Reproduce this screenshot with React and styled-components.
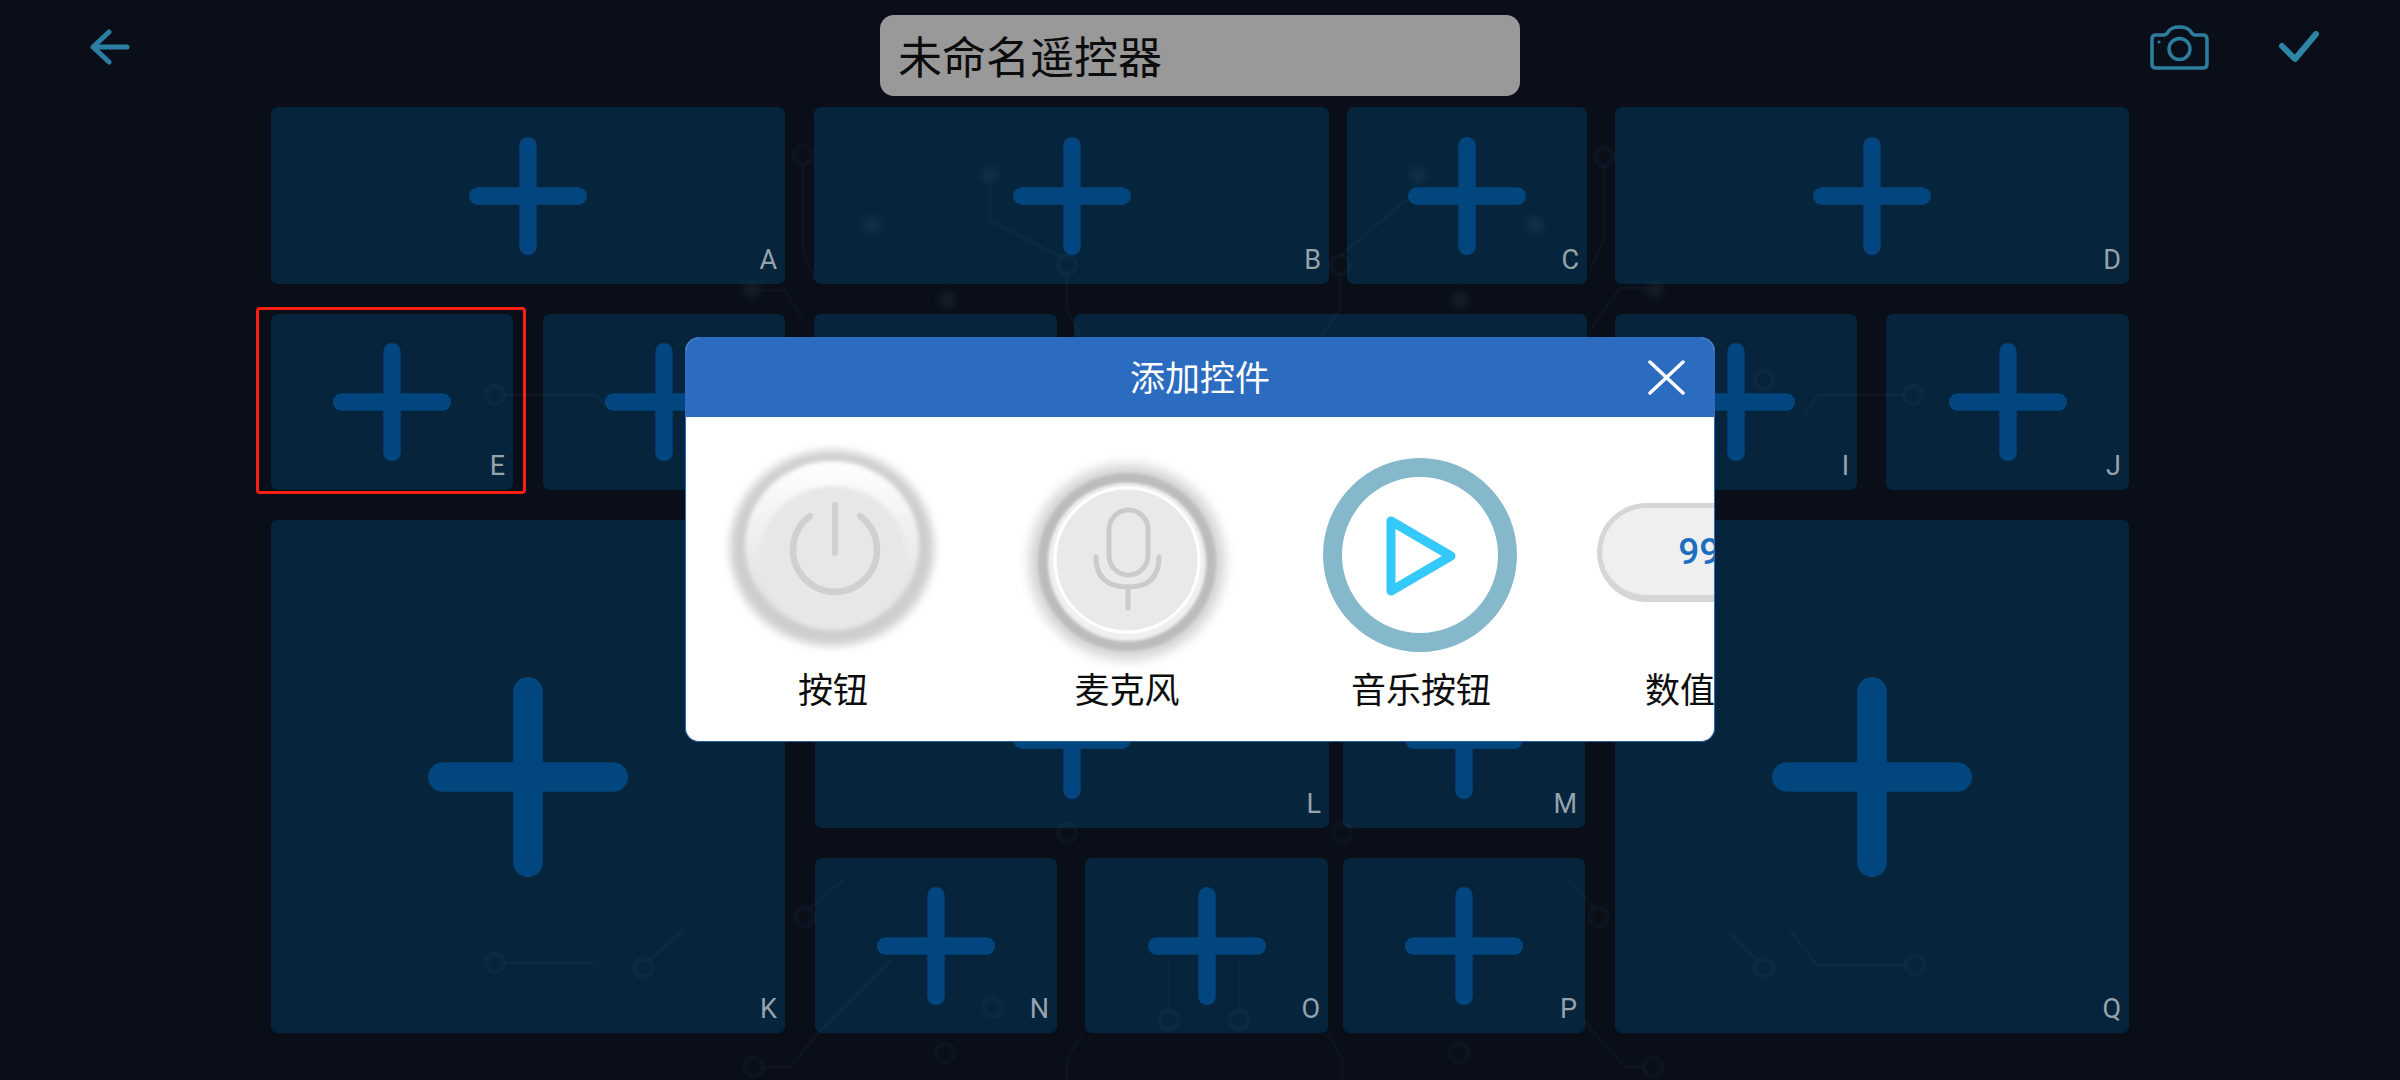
import React from "react";
import styled, { createGlobalStyle } from "styled-components";

const GlobalStyle = createGlobalStyle`
  html, body {
    margin: 0;
    padding: 0;
    background: #090e18;
  }
`;

const Page = styled.div`
  position: relative;
  width: 2400px;
  height: 1080px;
  overflow: hidden;
  background: #090e18;
  font-family: "Noto Sans CJK SC", "Noto Sans", sans-serif;
`;

const TopBar = styled.header`
  display: grid;
  grid-template-columns: 880px 640px 1fr;
  align-items: start;
  height: 107px;
  padding-top: 15px;
  box-sizing: border-box;
`;

const LeftCell = styled.div`
  display: flex;
  align-items: center;
  height: 64px;
  padding-left: 90px;
`;

const RightCell = styled.div`
  display: flex;
  align-items: center;
  justify-content: flex-end;
  gap: 70px;
  height: 64px;
  padding-right: 81px;
`;

const TitleInput = styled.div`
  display: flex;
  align-items: center;
  height: 81px;
  padding: 0 0 2px 18px;
  box-sizing: border-box;
  background: #999999;
  border-radius: 14px;
  color: #0c0c0c;
  font-size: 44px;
`;

const Board = styled.main`
  display: flex;
  flex-direction: column;
  gap: 30px;
  padding-left: 271px;
`;

const Row = styled.div`
  display: flex;
  height: ${({ $h }) => $h}px;
`;

const Card = styled.div`
  position: relative;
  display: grid;
  flex: none;
  width: ${({ $w }) => $w}px;
  margin-left: ${({ $ml }) => $ml || 0}px;
  background: #06243b;
  border-radius: 7px;
`;

const PlusSvg = styled.svg`
  grid-area: 1 / 1;
  place-self: center;
`;

const Letter = styled.span`
  grid-area: 1 / 1;
  place-self: end;
  margin: 0 8px 8px 0;
  color: #97a3ab;
  font-family: Roboto, "Liberation Sans", sans-serif;
  font-size: 27px;
  line-height: 32px;
`;

const Selection = styled.div`
  position: absolute;
  inset: -7px -13px -4px -15px;
  border: 3px solid #fb1f12;
  border-radius: 4px;
`;

const MiddleColumn = styled.div`
  display: flex;
  flex: none;
  flex-direction: column;
  justify-content: flex-end;
  gap: 30px;
  width: 772px;
  margin-left: 29px;
`;

const TraceLayer = styled.svg`
  position: absolute;
  inset: 0;
  pointer-events: none;
`;

const Modal = styled.section`
  position: absolute;
  left: 685px;
  top: 337px;
  width: 1030px;
  height: 405px;
  box-sizing: border-box;
  overflow: hidden;
  background: #ffffff;
  border: 1px solid #2b6cc0;
  border-bottom-color: #2a5f9e;
  border-radius: 14px;
`;

const ModalHeader = styled.div`
  display: grid;
  grid-template-columns: 1fr auto 1fr;
  align-items: center;
  height: 79px;
  padding-bottom: 4px;
  box-sizing: border-box;
  background: #2b6cc0;
  color: #ffffff;
  font-size: 35px;
`;

const ModalTitle = styled.span`
  grid-column: 2;
`;

const CloseIcon = styled.svg`
  grid-column: 3;
  justify-self: end;
  margin: 4px 29px 0 0;
`;

const WidgetList = styled.div`
  display: flex;
  padding-top: 23px;
`;

const Widget = styled.div`
  display: flex;
  flex: none;
  flex-direction: column;
  align-items: center;
  width: 294px;
`;

const WidgetSlot = styled.div`
  display: flex;
  justify-content: center;
  width: 100%;
  height: 228px;
`;

const WidgetLabel = styled.div`
  color: #0d0d0d;
  font-size: 35px;
  line-height: 40px;
  white-space: nowrap;
`;

const ValuePill = styled.div`
  display: flex;
  align-items: center;
  justify-content: center;
  width: 236px;
  height: 99px;
  margin-top: 63px;
  box-sizing: border-box;
  background: #efefef;
  border: 5px solid #d6d6d6;
  border-bottom-width: 7px;
  border-radius: 50px;
  color: #1c6fbe;
  font-family: Roboto, "Liberation Sans", sans-serif;
  font-size: 37px;
  font-weight: 500;
`;

const Plus = ({ size }) => (
  <PlusSvg width={size} height={size} viewBox="0 0 100 100">
    <rect x="42.6" width="14.8" height="100" rx="7.4" fill="#02467f" />
    <rect y="42.6" width="100" height="14.8" rx="7.4" fill="#02467f" />
  </PlusSvg>
);

const Tile = ({ letter, w, ml, big, selected }) => (
  <Card $w={w} $ml={ml}>
    <Plus size={big ? 200 : 118} />
    <Letter>{letter}</Letter>
    {selected && <Selection />}
  </Card>
);

const BackIcon = () => (
  <svg width="40" height="36" viewBox="0 0 40 36" fill="none" stroke="#2c7ea3" strokeWidth="5" strokeLinecap="round" strokeLinejoin="round">
    <path d="M19 3 L3 18 L19 33 M3 18 H37" />
  </svg>
);

const CameraIcon = () => (
  <svg width="59" height="45" viewBox="0 0 59 45" fill="none" stroke="#2d7d9f" strokeWidth="3.5">
    <path d="M6 10 H14 Q16 10 18 7 Q21 2 29.5 2 Q38 2 41 7 Q43 10 45 10 H53 Q57 10 57 14 V39 Q57 43 53 43 H6 Q2 43 2 39 V14 Q2 10 6 10 Z" />
    <circle cx="29.5" cy="24" r="10.5" />
    <circle cx="9" cy="17" r="1.6" fill="#2d7d9f" stroke="none" />
  </svg>
);

const CheckIcon = () => (
  <svg width="40" height="32" viewBox="0 0 40 32" fill="none" stroke="#2d85a8" strokeWidth="6" strokeLinecap="round" strokeLinejoin="round">
    <path d="M3 15 L16 28 L37 3" />
  </svg>
);

const PowerButton = () => (
  <svg width="240" height="228" viewBox="0 0 240 228">
    <defs>
      <filter id="powerBlur" x="-10%" y="-10%" width="120%" height="120%">
        <feGaussianBlur stdDeviation="4" />
      </filter>
      <filter id="powerSoft" x="-10%" y="-10%" width="120%" height="120%">
        <feGaussianBlur stdDeviation="2" />
      </filter>
      <linearGradient id="powerFace" x1="0" y1="0" x2="0" y2="1">
        <stop offset="0" stopColor="#ffffff" />
        <stop offset="0.35" stopColor="#f2f2f2" />
        <stop offset="1" stopColor="#dcdcdc" />
      </linearGradient>
    </defs>
    <ellipse cx="119" cy="108" rx="102" ry="98" fill="#cecece" filter="url(#powerBlur)" />
    <ellipse cx="119" cy="105" rx="87" ry="84" fill="url(#powerFace)" filter="url(#powerSoft)" />
    <ellipse cx="120" cy="118" rx="74" ry="72" fill="#e7e7e7" filter="url(#powerSoft)" />
    <path d="M97 76 A42 42 0 1 0 147 76" fill="none" stroke="#d0d0d0" strokeWidth="6.5" strokeLinecap="round" />
    <path d="M122 65 V113" stroke="#d0d0d0" strokeWidth="6" strokeLinecap="round" />
  </svg>
);

const MicButton = () => (
  <svg width="240" height="228" viewBox="0 0 240 228">
    <defs>
      <filter id="micBlur" x="-15%" y="-15%" width="130%" height="130%">
        <feGaussianBlur stdDeviation="6" />
      </filter>
      <filter id="micSoft" x="-10%" y="-10%" width="120%" height="120%">
        <feGaussianBlur stdDeviation="1.5" />
      </filter>
    </defs>
    <circle cx="120" cy="122" r="98" fill="#d4d4d4" filter="url(#micBlur)" />
    <circle cx="120" cy="122" r="84" fill="#f0f0f0" stroke="#bcbcbc" strokeWidth="10" filter="url(#micSoft)" />
    <circle cx="120" cy="120" r="72" fill="#e9e9e9" stroke="#ffffff" strokeWidth="3" />
    <g fill="none" stroke="#cbcbcb" strokeWidth="5" strokeLinecap="round">
      <rect x="102" y="70" width="39" height="65" rx="19.5" />
      <path d="M89 117 Q89 147 121 147 Q152 147 152 117" />
      <path d="M121 147 V168" />
    </g>
  </svg>
);

const MusicButton = () => (
  <svg width="240" height="228" viewBox="0 0 240 228">
    <circle cx="119" cy="115" r="87.5" fill="none" stroke="#86b8cc" strokeWidth="19" />
    <path d="M90 81 L150 116 L90 151 Z" fill="none" stroke="#35c8fb" strokeWidth="9" strokeLinejoin="round" />
  </svg>
);

const CloseGlyph = () => (
  <CloseIcon width="37" height="35" viewBox="0 0 37 35" fill="none" stroke="#ffffff" strokeWidth="3.5" strokeLinecap="round">
    <path d="M2 2 L35 33 M35 2 L2 33" />
  </CloseIcon>
);

const RINGS = [
  [803, 155], [1067, 265], [1340, 265], [1604, 157], [495, 395], [1913, 395], [1764, 380],
  [495, 963], [643, 968], [805, 917], [754, 1067], [1067, 833], [1342, 833], [1169, 1020],
  [1239, 1020], [993, 1007], [945, 1053], [1459, 1053], [1599, 917], [1653, 1067],
  [1764, 968], [1915, 965],
];

const DOTS = [
  [990, 175], [872, 225], [947, 300], [1418, 175], [1535, 225], [1460, 300], [1655, 290], [752, 290],
];

const TRACES = [
  "M803 164 V250 L815 280",
  "M990 185 V220 L1062 258",
  "M1067 274 V310 L1080 335",
  "M1340 256 L1418 190",
  "M1340 274 V310 L1320 337",
  "M1604 166 V240 L1590 270",
  "M1650 288 H1620 L1590 330",
  "M760 290 H785 L802 320",
  "M504 395 H597 L610 410",
  "M1904 395 H1817 L1805 415",
  "M504 963 H597",
  "M649 960 L684 930",
  "M810 908 L843 880",
  "M763 1067 H790 L821 1030 L891 960",
  "M1169 960 V1011",
  "M1239 960 V1011",
  "M1083 1033 L1067 1060 V1080",
  "M1328 1033 L1342 1060 V1080",
  "M1594 908 L1567 880",
  "M1583 1020 L1625 1067 H1644",
  "M1758 961 L1729 932",
  "M1906 965 H1817 L1790 930",
];

const CircuitTraces = () => (
  <TraceLayer width="2400" height="1080" viewBox="0 0 2400 1080" fill="none" stroke="#9fc4d8" strokeOpacity="0.035">
    <defs>
      <filter id="dotBlur" x="-50%" y="-50%" width="200%" height="200%">
        <feGaussianBlur stdDeviation="3" />
      </filter>
    </defs>
    {TRACES.map((d) => (
      <path key={d} d={d} strokeWidth="3" />
    ))}
    {RINGS.map(([x, y]) => (
      <circle key={`${x}-${y}`} cx={x} cy={y} r="9" strokeWidth="5" />
    ))}
    {DOTS.map(([x, y]) => (
      <circle key={`${x}-${y}`} cx={x} cy={y} r="9" fill="#9fc4d8" fillOpacity="0.07" stroke="none" filter="url(#dotBlur)" />
    ))}
  </TraceLayer>
);

export default function App() {
  return (
    <Page>
      <GlobalStyle />
      <TopBar>
        <LeftCell>
          <BackIcon />
        </LeftCell>
        <TitleInput>未命名遥控器</TitleInput>
        <RightCell>
          <CameraIcon />
          <CheckIcon />
        </RightCell>
      </TopBar>

      <Board>
        <Row $h={177}>
          <Tile letter="A" w={514} />
          <Tile letter="B" w={515} ml={29} />
          <Tile letter="C" w={240} ml={18} />
          <Tile letter="D" w={514} ml={28} />
        </Row>
        <Row $h={176}>
          <Tile letter="E" w={242} selected />
          <Tile letter="F" w={242} ml={30} />
          <Tile letter="G" w={243} ml={29} />
          <Tile letter="H" w={513} ml={17} />
          <Tile letter="I" w={242} ml={28} />
          <Tile letter="J" w={243} ml={29} />
        </Row>
        <Row $h={513}>
          <Tile letter="K" w={514} big />
          <MiddleColumn>
            <Row $h={177}>
              <Tile letter="L" w={514} ml={1} />
              <Tile letter="M" w={242} ml={14} />
            </Row>
            <Row $h={175}>
              <Tile letter="N" w={242} ml={1} />
              <Tile letter="O" w={243} ml={28} />
              <Tile letter="P" w={242} ml={15} />
            </Row>
          </MiddleColumn>
          <Tile letter="Q" w={514} ml={29} big />
        </Row>
      </Board>

      <CircuitTraces />

      <Modal>
        <ModalHeader>
          <ModalTitle>添加控件</ModalTitle>
          <CloseGlyph />
        </ModalHeader>
        <WidgetList>
          <Widget>
            <WidgetSlot>
              <PowerButton />
            </WidgetSlot>
            <WidgetLabel>按钮</WidgetLabel>
          </Widget>
          <Widget>
            <WidgetSlot>
              <MicButton />
            </WidgetSlot>
            <WidgetLabel>麦克风</WidgetLabel>
          </Widget>
          <Widget>
            <WidgetSlot>
              <MusicButton />
            </WidgetSlot>
            <WidgetLabel>音乐按钮</WidgetLabel>
          </Widget>
          <Widget>
            <WidgetSlot>
              <ValuePill>99.9</ValuePill>
            </WidgetSlot>
            <WidgetLabel>数值显示</WidgetLabel>
          </Widget>
        </WidgetList>
      </Modal>
    </Page>
  );
}
